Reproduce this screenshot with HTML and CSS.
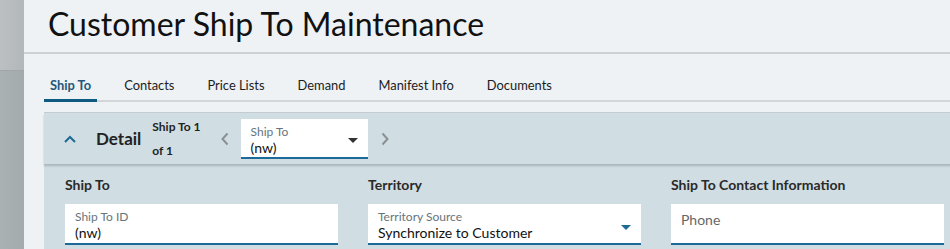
FILE: index.html
```html
<!DOCTYPE html>
<html lang="en">
<head>
    <meta charset="UTF-8">
    <title>Customer Ship To Maintenance</title>
    <link rel="stylesheet" href="styles.css">
</head>
<body>
    <div class="rail">
        <div class="rail-top"></div>
        <div class="rail-bottom"></div>
    </div>
    <div class="main">
        <header class="page-header">
            <h1>Customer Ship To Maintenance</h1>
        </header>
        <nav class="tabs">
            <a class="tab active">Ship To</a>
            <a class="tab">Contacts</a>
            <a class="tab">Price Lists</a>
            <a class="tab">Demand</a>
            <a class="tab">Manifest Info</a>
            <a class="tab">Documents</a>
        </nav>

        <section class="panel">
            <div class="panel-head">
                <svg class="collapse" width="12" height="8" viewBox="0 0 12 8">
                    <path d="M1 7 L6 2 L11 7" fill="none" stroke="#1d6a96" stroke-width="2"/>
                </svg>
                <span class="panel-title">Detail</span>
                <div class="pager">
                    <span>Ship To 1</span>
                    <span>of 1</span>
                </div>
                <svg class="nav-arrow" width="8" height="14" viewBox="0 0 8 14">
                    <path d="M6.5 1.5 L1.5 7 L6.5 12.5" fill="none" stroke="#8a9094" stroke-width="2"/>
                </svg>
                <div class="field select small">
                    <span class="field-label">Ship To</span>
                    <span class="field-value">(nw)</span>
                    <span class="caret dark"></span>
                </div>
                <svg class="nav-arrow" width="8" height="14" viewBox="0 0 8 14">
                    <path d="M1.5 1.5 L6.5 7 L1.5 12.5" fill="none" stroke="#8a9094" stroke-width="2"/>
                </svg>
            </div>

            <div class="panel-body">
                <div class="column">
                    <h3>Ship To</h3>
                    <div class="field">
                        <span class="field-label">Ship To ID</span>
                        <span class="field-value">(nw)</span>
                    </div>
                </div>
                <div class="column">
                    <h3>Territory</h3>
                    <div class="field select">
                        <span class="field-label">Territory Source</span>
                        <span class="field-value">Synchronize to Customer</span>
                        <span class="caret"></span>
                    </div>
                </div>
                <div class="column">
                    <h3>Ship To Contact Information</h3>
                    <div class="field empty">
                        <span class="placeholder">Phone</span>
                    </div>
                </div>
            </div>
        </section>
    </div>
</body>
</html>
```

FILE: styles.css
```css
body {
    margin: 0;
    display: flex;
    height: 249px;
    overflow: hidden;
    font-family: "Source Sans Pro", Lato, "Noto Sans", sans-serif;
    background-color: #eef2f5;
    color: #222;
}
.rail {
    width: 24px;
    flex-shrink: 0;
    display: flex;
    flex-direction: column;
}
.rail-top {
    height: 70px;
    background: linear-gradient(to right, #bcc0c2, #b2b7b9);
}
.rail-bottom {
    flex: 1;
    background: linear-gradient(to right, #aab1b2, #a3abac);
    border-top: 1px solid #a0a7a9;
}
.main {
    flex: 1;
    min-width: 0;
    overflow: hidden;
}
.page-header {
    height: 52px;
    border-bottom: 2px solid #cdd1d4;
    padding-left: 24px;
}
.page-header h1 {
    margin: 0;
    padding-top: 4px;
    font-size: 32px;
    font-weight: normal;
    color: #111;
}
.tabs {
    display: flex;
    gap: 21px;
    margin: 18px 0 0 20px;
    border-bottom: 2px solid #d3d6d9;
}
.tab {
    padding: 0 6px;
    height: 27px;
    font-size: 12.9px;
    line-height: 27px;
    color: #1c1c1c;
    border-bottom: 3px solid transparent;
    margin-bottom: -2px;
}
.tab.active {
    color: #23577a;
    font-weight: bold;
    border-bottom-color: #0f5a80;
}
.panel {
    margin: 10px -40px 0 20px;
    background-color: #d0dde2;
    border-top: 1px solid #c3ccd0;
    height: 137px;
}
.panel-head {
    display: flex;
    align-items: center;
    height: 51px;
    padding-left: 20px;
    box-shadow: 0 2px 2px rgba(0, 0, 0, 0.18);
}
.collapse {
    margin-right: 20px;
}
.panel-title {
    font-size: 17px;
    font-weight: bold;
    margin-right: 11px;
}
.pager {
    display: flex;
    flex-direction: column;
    font-size: 12px;
    font-weight: bold;
    line-height: 24px;
    margin-right: 20px;
}
.nav-arrow {
    margin: 0 12px 0 0;
}
.nav-arrow:last-child {
    margin-left: 13px;
}
.field {
    position: relative;
    background-color: #fff;
    border-bottom: 2px solid #1b6a9a;
    padding: 5px 10px 0;
    box-sizing: border-box;
    height: 41px;
    display: flex;
    flex-direction: column;
}
.field.small {
    width: 127px;
    height: 40px;
}
.field-label {
    font-size: 12px;
    color: #67747b;
    line-height: 15px;
}
.field-value {
    font-size: 14px;
    line-height: 18px;
    color: #111;
}
.placeholder {
    font-size: 14px;
    color: #666;
    line-height: 22px;
}
.caret {
    position: absolute;
    right: 10px;
    top: 21px;
    width: 0;
    height: 0;
    border-left: 5px solid transparent;
    border-right: 5px solid transparent;
    border-top: 5px solid #1b6a9a;
}
.caret.dark {
    top: 19px;
    border-top-color: #333;
}
.panel-body {
    display: flex;
    gap: 30px;
    padding: 12px 0 0 21px;
}
.column {
    width: 273px;
}
.column h3 {
    margin: 0 0 10px;
    font-size: 14px;
    line-height: 18px;
    color: #2a2a2a;
}
```
